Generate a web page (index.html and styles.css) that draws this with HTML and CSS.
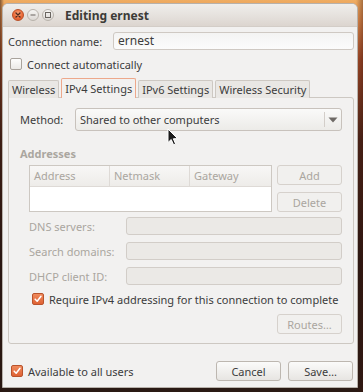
FILE: index.html
```html
<!DOCTYPE html>
<html lang="en">
<head>
  <meta charset="UTF-8" />
  <title>Editing ernest</title>
  <link rel="stylesheet" href="styles.css">
</head>
<body>
  <div class="window">
    <!-- title bar -->
    <div class="titlebar">
      <div class="wm-buttons">
        <span class="wm-btn wm-close">
          <svg width="12" height="12" viewBox="0 0 12 12"><path d="M4 4 L8 8 M8 4 L4 8" stroke="#4a2a1e" stroke-width="1.3" stroke-linecap="round"/></svg>
        </span>
        <span class="wm-btn">
          <svg width="12" height="12" viewBox="0 0 12 12"><path d="M3.5 6 H8.5" stroke="#6a6560" stroke-width="1.2"/></svg>
        </span>
        <span class="wm-btn">
          <svg width="12" height="12" viewBox="0 0 12 12"><rect x="3.5" y="3.5" width="5" height="5" fill="none" stroke="#6a6560" stroke-width="1"/></svg>
        </span>
      </div>
      <span class="title">Editing ernest</span>
    </div>

    <div class="content">
      <div class="name-row">
        <span class="label">Connection name:</span>
        <div class="entry">ernest</div>
      </div>
      <div class="check-row auto-row">
        <span class="checkbox"></span>
        <span>Connect automatically</span>
      </div>

      <div class="tabs">
        <span class="tab">Wireless</span>
        <span class="tab active">IPv4 Settings</span>
        <span class="tab">IPv6 Settings</span>
        <span class="tab">Wireless Security</span>
      </div>

      <div class="panel">
        <div class="method-row">
          <span class="label method-label">Method:</span>
          <div class="combo">
            <span class="combo-text">Shared to other computers</span>
            <span class="combo-arrow">
              <svg width="10" height="6" viewBox="0 0 10 6"><path d="M0.5 0.5 H9.5 L5 5.5 Z" fill="#6e6a66"/></svg>
            </span>
          </div>
        </div>

        <div class="section-title">Addresses</div>
        <div class="addr-row">
          <div class="addr-table">
            <div class="addr-head">
              <span class="col">Address</span>
              <span class="col">Netmask</span>
              <span class="col">Gateway</span>
            </div>
          </div>
          <div class="addr-buttons">
            <span class="btn disabled">Add</span>
            <span class="btn disabled">Delete</span>
          </div>
        </div>

        <div class="form-row">
          <span class="form-label">DNS servers:</span>
          <div class="entry disabled"></div>
        </div>
        <div class="form-row">
          <span class="form-label">Search domains:</span>
          <div class="entry disabled"></div>
        </div>
        <div class="form-row">
          <span class="form-label">DHCP client ID:</span>
          <div class="entry disabled"></div>
        </div>

        <div class="check-row require-row">
          <span class="checkbox checked">
            <svg width="12" height="12" viewBox="0 0 12 12"><path d="M2.6 6.2 L5 8.6 L9.6 2.8" fill="none" stroke="#fff" stroke-width="1.8" stroke-linecap="round" stroke-linejoin="round"/></svg>
          </span>
          <span>Require IPv4 addressing for this connection to complete</span>
        </div>

        <div class="routes-row">
          <span class="btn disabled">Routes…</span>
        </div>
      </div>

      <div class="footer">
        <div class="check-row all-users">
          <span class="checkbox checked">
            <svg width="12" height="12" viewBox="0 0 12 12"><path d="M2.6 6.2 L5 8.6 L9.6 2.8" fill="none" stroke="#fff" stroke-width="1.8" stroke-linecap="round" stroke-linejoin="round"/></svg>
          </span>
          <span>Available to all users</span>
        </div>
        <div class="footer-buttons">
          <span class="btn">Cancel</span>
          <span class="btn">Save…</span>
        </div>
      </div>
    </div>

    <!-- mouse pointer -->
    <svg class="pointer" width="12" height="18" viewBox="0 0 12 18">
      <path d="M1 1 V14.5 L4.2 11.5 L6.6 16.8 L8.6 15.9 L6.3 10.8 L10.6 10.6 Z" fill="#1a1a1a" stroke="#fff" stroke-width="1" stroke-linejoin="round"/>
    </svg>
  </div>
</body>
</html>
```

FILE: styles.css
```css
:root {
  --bg: #f2f1f0;
  --text: #3c3c3c;
  --muted: #aaa69f;
  --border: #c6c1bb;
  --orange: #e2693a;
}
html, body {
  margin: 0; padding: 0;
}
body {
  width: 363px;
  height: 392px;
  overflow: hidden;
  font-family: 'Noto Sans', 'DejaVu Sans', sans-serif;
  font-size: 11px;
  color: var(--text);
  background:
    linear-gradient(90deg, rgba(40,20,14,0.55) 0, rgba(40,20,14,0) 4px, rgba(0,0,0,0) 356px, rgba(60,20,12,0.4) 363px),
    linear-gradient(180deg, #efad62 0, #e08c4c 20px, #a24a28 60px, #4a2418 140px, #2a1712 260px, #2a1a14 392px);
}
.window {
  position: relative;
  margin: 3px 5px 0 2px;
  width: 356px;
  height: 385px;
  box-sizing: border-box;
  border: 1px solid #b7b1aa;
  border-radius: 6px 6px 0 0;
  background: var(--bg);
  display: flex;
  flex-direction: column;
  overflow: hidden;
}

/* title bar */
.titlebar {
  height: 22px;
  display: flex;
  align-items: center;
  background: linear-gradient(180deg, #efeeeb 0, #e6e2de 50%, #dcd5cf 100%);
  border-bottom: 1px solid #d3cdc7;
  padding-left: 9px;
}
.wm-buttons {
  display: flex;
  gap: 3px;
  margin-right: 11px;
}
.wm-btn {
  width: 12px; height: 12px;
  border-radius: 50%;
  box-sizing: border-box;
  border: 1px solid #b8b2ab;
  background: linear-gradient(180deg, #f6f5f3, #dcd8d4);
  display: flex;
  align-items: center;
  justify-content: center;
}
.wm-btn svg { display: block; flex: none; }
.wm-close {
  border-color: #b94e26;
  background: radial-gradient(circle at 50% 35%, #f8a27a 0, #ec6c3a 55%, #d1532a 100%);
}
.title {
  font-weight: bold;
  font-size: 12px;
  color: #3c3b37;
}

.content {
  flex: 1;
  display: flex;
  flex-direction: column;
  padding: 5px 3px 0 5px;
}
.label { white-space: nowrap; }

.name-row {
  display: flex;
  align-items: center;
  height: 18px;
}
.name-row .label { width: 105px; }
.entry {
  flex: 1;
  height: 18px;
  box-sizing: border-box;
  border: 1px solid #cfc9c3;
  border-radius: 3px;
  background: linear-gradient(180deg, #f4f4f3 0, #fcfcfc 100%);
  padding: 0 4px;
  line-height: 16px;
  font-size: 12px;
}
.entry.disabled {
  background: #ebe9e6;
  border-color: #d2cdc8;
}

.check-row {
  display: flex;
  align-items: center;
  height: 20px;
  white-space: nowrap;
}
.checkbox {
  width: 12px; height: 12px;
  box-sizing: border-box;
  border: 1px solid #a9a39c;
  border-radius: 2px;
  background: linear-gradient(180deg, #fdfdfc, #ebe9e6);
  margin-right: 5px;
  flex: none;
  display: flex;
  align-items: center;
  justify-content: center;
}
.checkbox svg { display: block; }
.checkbox.checked {
  border-color: #b9532c;
  background: linear-gradient(180deg, #ef8a5c, #df6234);
}
.auto-row {
  margin-top: 4px;
  padding-left: 2px;
}

/* notebook tabs */
.tabs {
  display: flex;
  align-items: flex-end;
  gap: 2px;
  margin-top: 5px;
  height: 19px;
  position: relative;
  z-index: 1;
}
.tab {
  height: 18px;
  box-sizing: border-box;
  border: 1px solid #cdc8c2;
  border-bottom: none;
  border-radius: 2px 2px 0 0;
  background: #e9e7e4;
  padding: 0 3px;
  line-height: 18px;
  white-space: nowrap;
}
.tab.active {
  height: 20px;
  background: var(--bg);
  border-color: #eda88b;
  line-height: 19px;
}

.panel {
  height: 247px;
  box-sizing: border-box;
  border: 1px solid #cdc8c2;
  border-radius: 0 3px 3px 3px;
  margin-top: -1px;
  padding: 10px 11px 0 11px;
  display: flex;
  flex-direction: column;
}
.method-row {
  display: flex;
  align-items: center;
  height: 23px;
}
.method-label { width: 55px; }
.combo {
  flex: 1;
  height: 23px;
  box-sizing: border-box;
  border: 1px solid #c8c2bc;
  border-radius: 3px;
  background: linear-gradient(180deg, #fafaf9 0, #ecebe8 100%);
  display: flex;
  align-items: center;
}
.combo-text {
  flex: 1;
  padding-left: 4px;
  white-space: nowrap;
}
.combo-arrow {
  width: 16px;
  height: 15px;
  border-left: 1px solid #d3cec9;
  display: flex;
  align-items: center;
  justify-content: center;
}
.combo-arrow svg { display: block; }

.section-title {
  margin-top: 15px;
  height: 16px;
  line-height: 16px;
  font-weight: bold;
  color: var(--muted);
}

.addr-row {
  display: flex;
  gap: 5px;
  margin-top: 3px;
  padding-left: 9px;
}
.addr-table {
  width: 243px;
  height: 47px;
  box-sizing: border-box;
  border: 1px solid #cdc8c2;
  background: #fff;
}
.addr-head {
  display: flex;
  height: 20px;
  border-bottom: 1px solid #dedad6;
  background: linear-gradient(180deg, #f8f7f6, #eeece9);
}
.col {
  width: 80px;
  padding-left: 4px;
  box-sizing: border-box;
  line-height: 20px;
  color: var(--muted);
  border-right: 1px solid #dedad6;
}
.col:last-child { border-right: none; flex: 1; }
.addr-buttons {
  flex: 1;
  display: flex;
  flex-direction: column;
  gap: 7px;
}

.btn {
  height: 20px;
  box-sizing: border-box;
  border: 1px solid #bdb7b0;
  border-radius: 3px;
  background: linear-gradient(180deg, #fbfbfa 0, #e7e5e2 100%);
  display: flex;
  align-items: center;
  justify-content: center;
  white-space: nowrap;
}
.btn.disabled {
  color: var(--muted);
  border-color: #d6d1cc;
  background: #f1f0ee;
}

.form-row {
  display: flex;
  align-items: center;
  height: 18px;
  margin-top: 7px;
  padding-left: 9px;
}
.addr-row + .form-row { margin-top: 5px; }
.form-label {
  width: 97px;
  color: var(--muted);
  white-space: nowrap;
}

.require-row {
  margin-top: 4px;
  padding-left: 12px;
}
.routes-row {
  display: flex;
  justify-content: flex-end;
  margin-top: 5px;
}
.routes-row .btn { width: 65px; }

.footer {
  display: flex;
  align-items: center;
  justify-content: space-between;
  margin-top: 17px;
  padding-right: 1px;
}
.all-users { padding-left: 3px; }
.footer-buttons {
  display: flex;
  gap: 7px;
}
.footer-buttons .btn { width: 65px; }

.pointer {
  position: absolute;
  left: 164px;
  top: 124px;
}
```
